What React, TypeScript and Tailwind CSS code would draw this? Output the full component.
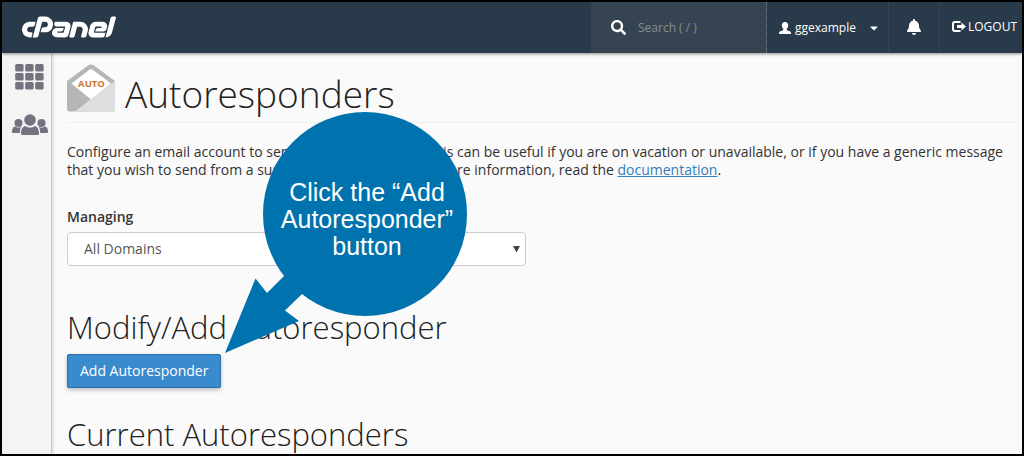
import { FaBell, FaCaretDown, FaSearch } from "react-icons/fa";
import { SiCpanel } from "react-icons/si";

function GridIcon() {
  return (
    <svg className="h-[26px] w-[29px]" viewBox="0 0 29 26" fill="#74727f" aria-hidden="true">
      {[0, 9, 18].map((y) =>
        [0, 10, 20].map((x) => <rect key={`${x}-${y}`} x={x + 0.2} y={y} width="8.400" height="7.400" rx="1.500" />)
      )}
    </svg>
  );
}

function UsersIcon() {
  return (
    <svg className="h-[22px] w-9" viewBox="0 0 36 22" fill="#74727f" aria-hidden="true">
      <circle cx="18" cy="6" r="5.800" />
      <circle cx="6.500" cy="9" r="4" />
      <circle cx="29.500" cy="9" r="4" />
      <path d="M9 19.500c0-4 1.500-7 4.500-7.500 2.500 2 6.500 2 9 0 3 .5 4.500 3.500 4.500 7.500 0 1-.6 1.500-1.500 1.500h-15c-.9 0-1.500-.5-1.500-1.500z" />
      <path d="M0 17.500C0 15 1 13 3 12.600c2 1.400 4.500 1.400 6.500 0C8.400 14.200 7.800 16.500 7.800 19H1.200C.4 19 0 18.500 0 17.500z" />
      <path d="M36 17.500c0-2.500-1-4.500-3-4.900-2 1.400-4.500 1.400-6.500 0 1.100 1.600 1.700 3.900 1.700 6.400h6.600c.8 0 1.200-.5 1.200-1.500z" />
    </svg>
  );
}

function UserIcon() {
  return (
    <svg className="h-3 w-3" viewBox="0 0 12 12" fill="currentColor" aria-hidden="true">
      <path d="M6 0c2 0 3.200 1.300 3.200 3.200C9.200 5 8.300 6 7.700 6.800v1.300c1.300.8 3.200 1.100 3.900 1.800.4.400.4 1.200.4 2.100H0c0-.9 0-1.700.4-2.100.7-.7 2.600-1 3.900-1.800V6.800C3.700 6 2.800 5 2.800 3.200 2.800 1.300 4 0 6 0z" />
    </svg>
  );
}

function LogoutIcon() {
  return (
    <svg className="h-[11px] w-[14px] shrink-0" viewBox="0 0 14 11" fill="currentColor" aria-hidden="true">
      <path d="M8.500 0v2H3.200C2.400 2 2 2.400 2 3.200v4.600C2 8.600 2.400 9 3.200 9h5.300v2H2.800C1 11 0 10 0 8.200V2.800C0 1 1 0 2.800 0z" />
      <path d="M9.500 1.500 14 5.500l-4.500 4V7H5V4h4.500z" />
    </svg>
  );
}

function EnvelopeIcon() {
  return (
    <svg className="h-12 w-12 shrink-0" viewBox="0 0 48 48" aria-hidden="true">
      <path d="M0 17 21 1.500c2-1.500 4-1.500 6 0L48 17v28c0 1.500-1 2.500-2.500 2.500h-43C1 47.500 0 46.500 0 45z" fill="#b5b6b8" />
      <path d="M4.500 19.500 22 6c1.300-1 2.700-1 4 0l18 13.500-20 16z" fill="#fff" />
      <path d="M48 17v28c0 1.500-1 2.500-2.500 2.500H8L24 35z" fill="#dedede" />
      <text x="24.500" y="22.500" textAnchor="middle" fontSize="9.500" fontWeight="700" fill="#c9792b" fontFamily="Open Sans, sans-serif">
        AUTO
      </text>
    </svg>
  );
}

function Header() {
  return (
    <header className="relative z-10 flex h-[51px] items-stretch bg-[#293a4a] text-xs text-white shadow-[0_1px_3px_rgba(0,0,0,0.45)]">
      <a href="#home" aria-label="cPanel" className="flex h-[50px] items-center pl-5">
        <SiCpanel className="h-[94px] w-[94px]" />
      </a>
      <label className="ml-auto flex w-44 items-center gap-3 border-r border-dotted border-[#7b8791] bg-[#364452] pl-5">
        <FaSearch className="size-[15px] shrink-0" aria-hidden="true" />
        <input
          type="search"
          aria-label="Search"
          placeholder="Search ( / )"
          className="w-full min-w-0 bg-transparent text-xs outline-none placeholder:text-[#858d96]"
        />
      </label>
      <button type="button" className="flex w-[122px] items-center gap-1 border-r border-[#364656] pl-3 font-medium">
        <UserIcon />
        <span>ggexample</span>
        <FaCaretDown className="ml-2 size-3" aria-hidden="true" />
      </button>
      <button type="button" aria-label="Notifications" className="flex w-[51px] items-center justify-center border-r border-[#364656] pb-0.5">
        <FaBell className="size-4" aria-hidden="true" />
      </button>
      <a href="#logout" className="flex w-[82px] items-center gap-0.5 pb-0.5 pl-3 font-medium">
        <LogoutIcon />
        <span>LOGOUT</span>
      </a>
    </header>
  );
}

function Callout() {
  return (
    <div className="pointer-events-none absolute top-[57px] left-[171px] h-[244px] w-[244px]">
      <svg className="absolute inset-0 h-full w-full" viewBox="223 110 244 244" fill="#0072ad" aria-hidden="true">
        <circle cx="365" cy="214" r="102" />
        <path d="M225 353 255.500 278.500 267 293 284 276 330 240 340 270 302 294 285 310.500 299 321z" />
      </svg>
      <p className="relative ml-11 pt-[69px] text-center font-['Liberation_Sans',Arial,sans-serif] text-[25px] leading-[27px] text-white">
        Click the “Add
        <br />
        Autoresponder”
        <br />
        button
      </p>
    </div>
  );
}

export default function App() {
  return (
    <div className="flex h-screen flex-col overflow-hidden border-2 border-black bg-[#fafafa] font-['Open_Sans',sans-serif] text-sm text-[#333]">
      <Header />
      <div className="flex min-h-0 flex-1">
        <nav aria-label="Main" className="flex w-[50px] shrink-0 flex-col items-center gap-6 border-r border-[#ccc] bg-[#f4f4f4] pt-[11px] pl-1.5 shadow-[1px_0_3px_rgba(0,0,0,0.15)]">
          <a href="#tools" aria-label="Tools">
            <GridIcon />
          </a>
          <a href="#users" aria-label="User manager">
            <UsersIcon />
          </a>
        </nav>
        <main className="relative min-w-0 flex-1 pr-[7px] pl-[15px]">
          <h1 className="flex h-[70px] items-start gap-2.5 border-b border-[#e8eeee] pt-[11px] text-[37px] leading-10 font-light text-[#222]">
            <EnvelopeIcon />
            <span className="pt-2.5">Autoresponders</span>
          </h1>
          <p className="mt-5 leading-[18px]">
            Configure an email account to send automated emails. This can be useful if you are on vacation or
            unavailable, or if you have a generic message that you wish to send from a support email account. For
            more information, read the{" "}
            <a href="#documentation" className="text-[#337fba] underline">
              documentation
            </a>
            .
          </p>
          <label htmlFor="domain" className="mt-7 block font-semibold">
            Managing
          </label>
          <div className="relative mt-[5px] max-w-[459px]">
            <select
              id="domain"
              className="block h-[34px] w-full appearance-none rounded border border-[#ccc] bg-white px-4 text-[#555]"
            >
              <option>All Domains</option>
            </select>
            <svg className="pointer-events-none absolute top-3.5 right-1.5 h-[7px] w-[7px]" viewBox="0 0 7 7" fill="#444" aria-hidden="true">
              <path d="M0 0h7L3.500 6.500z" />
            </svg>
          </div>
          <h2 className="mt-[43px] text-[31px] leading-9 font-light text-[#222]">Modify/Add Autoresponder</h2>
          <button
            type="button"
            className="mt-[9px] block h-[34px] rounded-xs border border-[#2a6fae] bg-[#3a8ace] px-3 text-white shadow-[0_2px_4px_rgba(0,0,0,0.25)]"
          >
            Add Autoresponder
          </button>
          <h2 className="mt-7 text-[31px] leading-9 font-light text-[#222]">Current Autoresponders</h2>
          <Callout />
        </main>
      </div>
    </div>
  );
}
